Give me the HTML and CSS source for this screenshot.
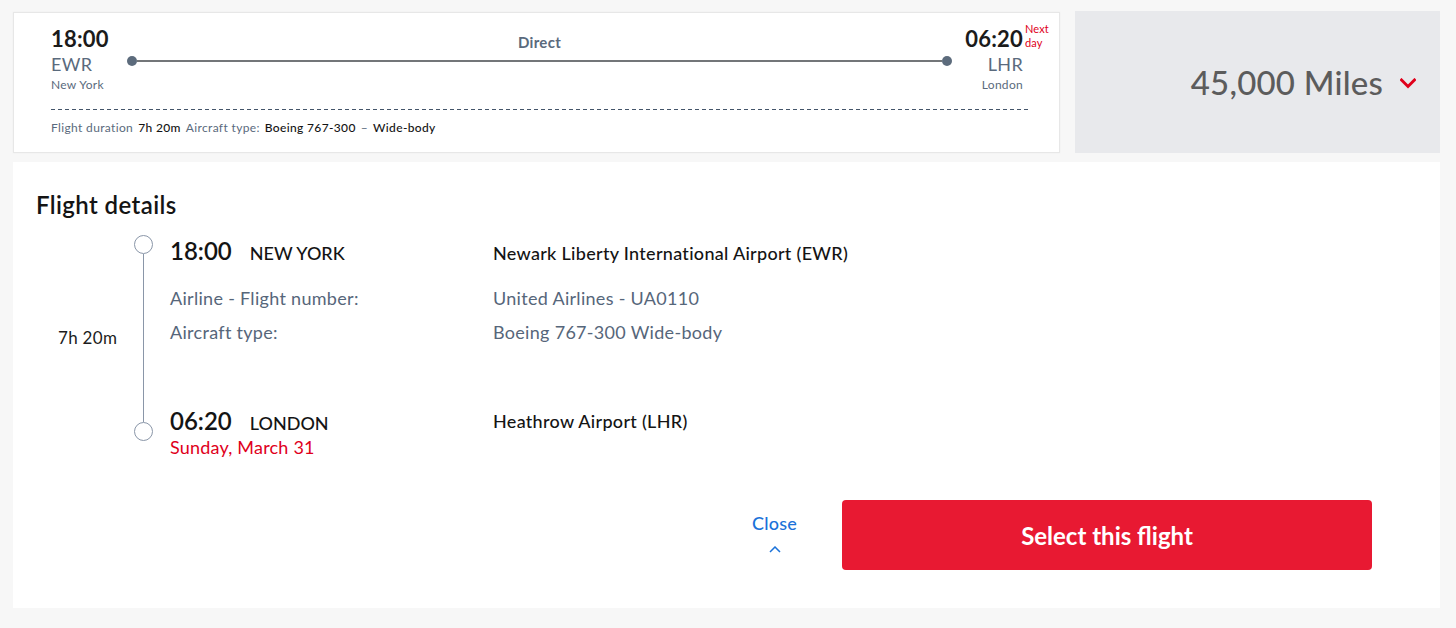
FILE: index.html
```html
<!DOCTYPE html>
<html lang="en">
<head>
<meta charset="utf-8">
<title>Flight</title>
<link rel="stylesheet" href="styles.css">
</head>
<body>
<div class="page">
  <div class="top-row">
    <section class="summary">
      <div class="route">
        <div class="end end-left">
          <div class="time">18:00</div>
          <div class="code">EWR</div>
          <div class="city">New York</div>
        </div>
        <div class="middle">
          <div class="direct">Direct</div>
          <div class="track"><span class="dot"></span><span class="bar"></span><span class="dot"></span></div>
        </div>
        <div class="end end-right">
          <div class="time"><span class="time-wrap">06:20<span class="next">Next<br>day</span></span></div>
          <div class="code">LHR</div>
          <div class="city">London</div>
        </div>
      </div>
      <div class="dash"></div>
      <div class="facts">
        <span class="muted">Flight duration</span>
        <span class="val">7h 20m</span>
        <span class="muted">Aircraft type:</span>
        <span class="val">Boeing 767-300</span>
        <span class="muted">–</span>
        <span class="val">Wide-body</span>
      </div>
    </section>
    <section class="miles">
      <span class="miles-text">45,000 Miles</span>
      <svg class="chev" width="16" height="11" viewBox="0 0 16 11"><polyline points="1.5,2 8,8.5 14.5,2" fill="none" stroke="#e0001b" stroke-width="3" stroke-linecap="square"/></svg>
    </section>
  </div>

  <section class="details">
    <h2 class="title">Flight details</h2>
    <div class="itinerary">
      <div class="dur-line">
        <div class="duration">7h 20m</div>
        <div class="timeline"><span class="circle"></span><span class="vline"></span><span class="circle"></span></div>
      </div>
      <div class="rows">
        <div class="row row-head">
          <div class="cell-left"><span class="big-time">18:00</span><span class="big-city">NEW YORK</span></div>
          <div class="cell-right airport">Newark Liberty International Airport (EWR)</div>
        </div>
        <div class="row row-info first-info">
          <div class="cell-left label">Airline - Flight number:</div>
          <div class="cell-right label">United Airlines - UA0110</div>
        </div>
        <div class="row row-info second-info">
          <div class="cell-left label">Aircraft type:</div>
          <div class="cell-right label">Boeing 767-300 Wide-body</div>
        </div>
        <div class="row row-arrive">
          <div class="cell-left">
            <div><span class="big-time">06:20</span><span class="big-city">LONDON</span></div>
            <div class="date">Sunday, March 31</div>
          </div>
          <div class="cell-right airport">Heathrow Airport (LHR)</div>
        </div>
      </div>
    </div>
    <div class="actions">
      <a class="close" href="#">
        <span>Close</span>
        <svg width="12" height="7" viewBox="0 0 12 7"><polyline points="1,6 6,1 11,6" fill="none" stroke="#1b72d9" stroke-width="1.5"/></svg>
      </a>
      <button class="select" type="button">Select this flight</button>
    </div>
  </section>
</div>
</body>
</html>
```
FILE: styles.css
```css
* { box-sizing: border-box; }
html, body { margin: 0; padding: 0; }
body {
  background: #f7f7f7;
  font-family: Lato, "Open Sans", "Liberation Sans", sans-serif;
  color: #161616;
  width: 1456px;
  height: 628px;
  overflow: hidden;
}
.page { padding: 11px 16px 0 13px; }

.top-row { display: flex; gap: 15px; align-items: flex-start; }

.summary {
  width: 1047px;
  height: 141px;
  margin-top: 1px;
  background: #fff;
  border: 1px solid #e7e7e7;
  box-shadow: 0 0 2px rgba(0,0,0,0.04);
  padding: 13px 28px 0 37px;
}
.route {
  display: grid;
  grid-template-columns: 76px 1fr 71px;
  padding-right: 8px;
}
.time { font-size: 22px; line-height: 26px; font-weight: 700; color: #1b1b1b; letter-spacing: 0.2px; }
.code { font-size: 18px; line-height: 20px; margin-top: 2px; color: #5a6a7d; letter-spacing: 0.3px; }
.city { font-size: 12px; line-height: 16px; margin-top: 3px; color: #5a6a7d; letter-spacing: 0.3px; }
.end-right { text-align: right; }
.time-wrap { position: relative; display: inline-block; }
.next {
  position: absolute;
  left: 100%;
  top: -4px;
  margin-left: 2px;
  font-size: 11px;
  line-height: 13.5px;
  font-weight: 400;
  letter-spacing: 0.1px;
  color: #e0001b;
  text-align: left;
}
.middle { display: flex; flex-direction: column; align-items: stretch; }
.direct {
  margin-top: 7px;
  text-align: center;
  font-size: 15px;
  line-height: 18px;
  font-weight: 700;
  letter-spacing: 0.3px;
  color: #5a6a7d;
}
.track { display: flex; align-items: center; margin-top: 5px; height: 10px; }
.dot { width: 10px; height: 10px; border-radius: 50%; background: #5c6b7c; flex: none; }
.bar { flex: 1; height: 2px; background: #737679; }

.dash {
  margin-top: 16px;
  height: 1px;
  background: repeating-linear-gradient(90deg, #44556a 0 4px, transparent 4px 7px);
}
.facts {
  display: flex;
  gap: 5px;
  margin-top: 10px;
  font-size: 12px;
  line-height: 16px;
  letter-spacing: 0.35px;
}
.muted { color: #5a6a7d; }
.val { color: #141414; font-weight: 500; }

.miles {
  width: 365px;
  height: 142px;
  background: #e8e9ec;
  display: flex;
  align-items: center;
  justify-content: flex-end;
  gap: 17px;
  padding-right: 24px;
}
.miles-text { font-size: 33px; font-weight: 500; color: #5c5c5c; letter-spacing: 0.2px; }
.chev { display: block; margin-top: 2px; }

.details {
  margin-top: 9px;
  width: 1427px;
  height: 446px;
  background: #fff;
  padding: 29px 68px 0 23px;
}
.title { margin: 0; font-size: 24px; line-height: 28px; font-weight: 600; letter-spacing: 0.4px; color: #141414; }

.itinerary { display: flex; align-items: flex-start; margin-top: 16px; padding-left: 22px; }
.dur-line { display: flex; align-items: center; }
.duration { width: 76px; font-size: 17px; line-height: 22px; color: #1c1c1c; letter-spacing: 0.3px; }
.timeline { width: 19px; height: 206px; display: flex; flex-direction: column; align-items: center; }
.circle { width: 19px; height: 19px; border-radius: 50%; border: 1.5px solid #8a96a8; flex: none; background: #fff; }
.vline { flex: 1; width: 1.5px; background: #8a96a8; }

.rows { margin-left: 17px; margin-top: 1px; }
.row { display: flex; }
.cell-left { width: 323px; flex: none; }
.row-head { align-items: baseline; }
.big-time { font-size: 24px; line-height: 30px; font-weight: 600; color: #141414; }
.big-city { font-size: 18px; line-height: 30px; font-weight: 500; margin-left: 18px; color: #141414; }
.airport { font-size: 18px; line-height: 30px; font-weight: 500; color: #141414; letter-spacing: 0.3px; }
.label { font-size: 18px; line-height: 24px; color: #56667a; letter-spacing: 0.3px; }
.first-info { margin-top: 18px; }
.second-info { margin-top: 10px; }
.row-arrive { margin-top: 62px; align-items: flex-start; }
.date { font-size: 18px; line-height: 20px; margin-top: -1px; color: #e0001b; letter-spacing: 0.2px; }

.actions { display: flex; justify-content: flex-end; align-items: center; gap: 45px; margin-top: 43px; }
.close {
  display: flex;
  flex-direction: column;
  align-items: center;
  gap: 13px;
  margin-bottom: 5px;
  text-decoration: none;
  color: #1b72d9;
  font-size: 18px;
  line-height: 20px;
  font-weight: 500;
  letter-spacing: 0.2px;
}
.close svg { display: block; }
.select {
  width: 530px;
  height: 70px;
  border: none;
  border-radius: 4px;
  background: #e81932;
  color: #fff;
  font-family: inherit;
  font-size: 24px;
  font-weight: 700;
  cursor: pointer;
}
```
